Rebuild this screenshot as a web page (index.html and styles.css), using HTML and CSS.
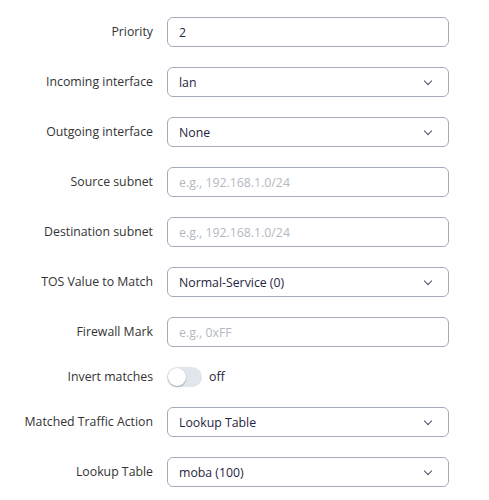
FILE: index.html
```html
<!DOCTYPE html>
<html lang="en">

<head>
    <meta charset="UTF-8">
    <title>Routing rule</title>
    <link rel="stylesheet" href="styles.css">
</head>

<body>
    <form class="rule">
        <label class="lbl" for="priority">Priority</label>
        <input class="field" type="text" id="priority" value="2">

        <label class="lbl">Incoming interface</label>
        <div class="field select"><span>lan</span><i class="chev"></i></div>

        <label class="lbl">Outgoing interface</label>
        <div class="field select"><span>None</span><i class="chev"></i></div>

        <label class="lbl" for="src">Source subnet</label>
        <input class="field" type="text" id="src" placeholder="e.g., 192.168.1.0/24">

        <label class="lbl" for="dst">Destination subnet</label>
        <input class="field" type="text" id="dst" placeholder="e.g., 192.168.1.0/24">

        <label class="lbl">TOS Value to Match</label>
        <div class="field select"><span>Normal-Service (0)</span><i class="chev"></i></div>

        <label class="lbl" for="mark">Firewall Mark</label>
        <input class="field" type="text" id="mark" placeholder="e.g., 0xFF">

        <label class="lbl short">Invert matches</label>
        <div class="toggle-row">
            <span class="toggle"><span class="knob"></span></span>
            <span class="state">off</span>
        </div>

        <label class="lbl">Matched Traffic Action</label>
        <div class="field select"><span>Lookup Table</span><i class="chev"></i></div>

        <label class="lbl">Lookup Table</label>
        <div class="field select"><span>moba (100)</span><i class="chev"></i></div>
    </form>
</body>

</html>
```

FILE: styles.css
```css
* {
    padding: 0;
    margin: 0;
    box-sizing: border-box;
}

body {
    background: #fff;
    font-family: 'Open Sans', 'Noto Sans', sans-serif;
    font-size: 12.3px;
    color: #333;
}

form.rule {
    display: grid;
    grid-template-columns: 153px 282px;
    column-gap: 14px;
    row-gap: 20px;
    align-items: center;
    padding-top: 17px;
}

.lbl {
    text-align: right;
    color: #333;
    margin-top: -1px;
}

.field {
    height: 30px;
    width: 282px;
    border: 1px solid #a3abbb;
    border-radius: 6px;
    padding: 0 11px;
    font-family: inherit;
    font-size: 12.3px;
    color: #1f2540;
    background: #fff;
    outline: none;
}

.field::placeholder {
    color: #b3b8c2;
}

.select {
    display: flex;
    align-items: center;
    justify-content: space-between;
}

.chev {
    width: 6px;
    height: 6px;
    border-right: 1.5px solid #4a5166;
    border-bottom: 1.5px solid #4a5166;
    transform: rotate(45deg);
    margin: -3px 6px 0 0;
}

.toggle-row {
    display: flex;
    align-items: center;
    gap: 7px;
    height: 20px;
}

.toggle {
    width: 35px;
    height: 20px;
    border-radius: 10px;
    background: #e1e5ec;
    display: flex;
    align-items: center;
    padding: 1px;
}

.knob {
    width: 18px;
    height: 18px;
    border-radius: 50%;
    background: #fff;
    box-shadow: 0 1px 2px rgba(0, 0, 0, 0.3);
}

.state {
    color: #1f2540;
    margin-top: -1px;
}
```
